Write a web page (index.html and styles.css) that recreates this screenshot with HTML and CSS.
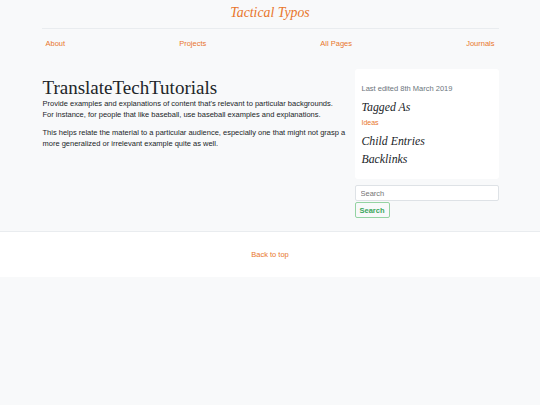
FILE: index.html
```html
<!DOCTYPE html>
<html>

<head>
    <meta charset="UTF-8">
    <title>TranslateTechTutorials - Tactical Typos</title>
    <link rel="stylesheet" href="styles.css">
</head>

<body>
    <div class="page">
        <header class="top">
            <a class="brand" href="#">Tactical Typos</a>
            <nav class="nav">
                <a href="#">About</a>
                <a href="#">Projects</a>
                <a href="#">All Pages</a>
                <a href="#">Journals</a>
            </nav>
        </header>

        <div class="content">
            <main class="entry">
                <h1>TranslateTechTutorials</h1>
                <p>Provide examples and explanations of content that's relevant to particular backgrounds. For instance, for people that like baseball, use baseball examples and explanations.</p>
                <p>This helps relate the material to a particular audience, especially one that might not grasp a more generalized or irrelevant example quite as well.</p>
            </main>

            <aside class="side">
                <div class="meta">
                    <p class="edited">Last edited 8th March 2019</p>
                    <h3>Tagged As</h3>
                    <a class="tag" href="#">Ideas</a>
                    <h3>Child Entries</h3>
                    <h3>Backlinks</h3>
                </div>
                <form class="search">
                    <input type="text" placeholder="Search">
                    <button type="button">Search</button>
                </form>
            </aside>
        </div>
    </div>

    <footer class="foot">
        <a href="#">Back to top</a>
    </footer>
</body>

</html>
```

FILE: styles.css
```css
html,
body {
    margin: 0;
    background: #f8f9fa;
    font-family: "Liberation Sans", Arial, sans-serif;
    color: #212529;
}

a {
    color: #e8762c;
    text-decoration: none;
}

.page {
    width: 457px;
    margin: 0 auto;
}

.top {
    padding-top: 4px;
}

/* titulo do blog, centralizado com a linha embaixo */
.brand {
    display: block;
    text-align: center;
    font-family: "Liberation Serif", Georgia, serif;
    font-style: italic;
    font-size: 13.8px;
    line-height: 18px;
    padding-bottom: 6px;
    border-bottom: 1px solid #e9ecef;
}

.nav {
    display: flex;
    justify-content: space-between;
    padding: 0 4px;
    margin-top: 10px;
    font-size: 7.5px;
    line-height: 10px;
}

/* coluna do texto + coluna lateral de 144px */
.content {
    display: grid;
    grid-template-columns: 1fr 144px;
    gap: 9px;
    margin-top: 20px;
}

.entry {
    padding-top: 9px;
    padding-left: 1px;
}

.entry h1 {
    margin: 0 0 1px;
    font-family: "Liberation Serif", Georgia, serif;
    font-weight: normal;
    font-size: 19px;
    line-height: 19px;
}

.entry p {
    margin: 0 0 7px;
    font-size: 7.5px;
    line-height: 11px;
}

.meta {
    background: #fff;
    border-radius: 3px;
    padding: 15px 7px 9px;
}

.edited {
    margin: 0 0 6px;
    font-size: 7.5px;
    line-height: 10px;
    color: #6c757d;
}

.meta h3 {
    margin: 0 0 4px;
    font-family: "Liberation Serif", Georgia, serif;
    font-style: italic;
    font-weight: normal;
    font-size: 11.8px;
    line-height: 14px;
}

.tag {
    display: block;
    font-size: 7px;
    line-height: 10px;
    margin-bottom: 6px;
}

.search {
    margin-top: 6px;
}

.search input {
    display: block;
    box-sizing: border-box;
    width: 100%;
    height: 16px;
    margin: 0 0 1px;
    padding: 0 5px;
    border: 1px solid #dee2e6;
    border-radius: 2px;
    background: #fff;
    font-family: inherit;
    font-size: 7.5px;
}

/* botao verde so com contorno claro */
.search button {
    display: block;
    height: 16px;
    padding: 0 4px;
    border: 1px solid #94d3a2;
    border-radius: 2px;
    background: transparent;
    color: #3aa55a;
    font-family: inherit;
    font-weight: bold;
    font-size: 7.5px;
}

.foot {
    margin-top: 13px;
    background: #fff;
    border-top: 1px solid #e9ecef;
    text-align: center;
    height: 45px;
    line-height: 45px;
    font-size: 7.5px;
}
```
